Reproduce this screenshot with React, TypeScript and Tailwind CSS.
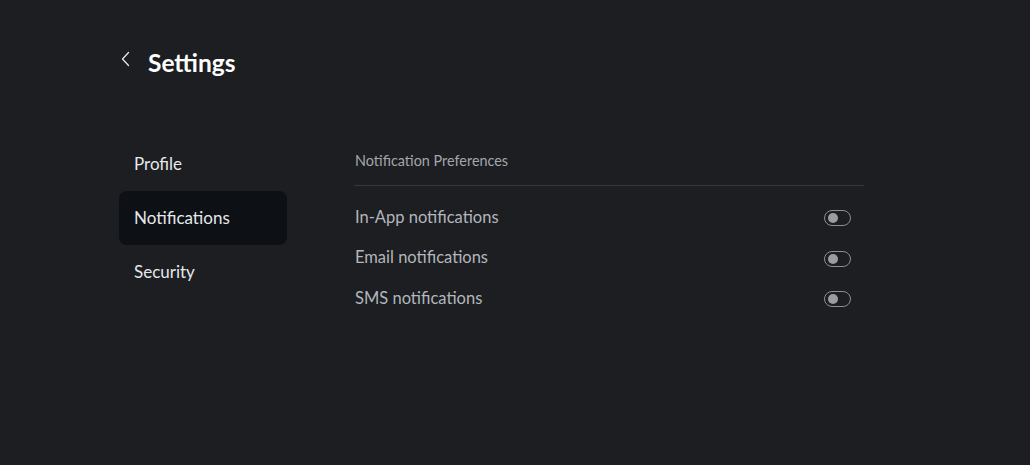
import React, { useState } from 'react';

const NAV_ITEMS = ['Profile', 'Notifications', 'Security'];

const PREFS = [
  { key: 'inApp', label: 'In-App notifications' },
  { key: 'email', label: 'Email notifications' },
  { key: 'sms', label: 'SMS notifications' },
];

function Toggle({ on, onChange }: { on: boolean; onChange: () => void }) {
  return (
    <button
      onClick={onChange}
      className={`relative w-[27px] h-[16px] rounded-full border border-[#8b8e93] flex items-center px-[3px] ${on ? 'justify-end bg-[#3b82f6]' : 'justify-start bg-transparent'}`}
    >
      <span className="block w-[10px] h-[10px] rounded-full bg-[#9a9ca0]" />
    </button>
  );
}

export default function App() {
  const [active, setActive] = useState('Notifications');
  const [prefs, setPrefs] = useState<Record<string, boolean>>({ inApp: false, email: false, sms: false });

  return (
    <div className="w-full min-h-[465px] bg-[#1c1e22] font-['Lato',sans-serif] pt-[45px] pl-[119px]">
      {/* Header */}
      <div className="flex items-center h-[36px]">
        <button className="w-[29px] h-[28px] flex items-center pl-[2px] -mt-[9px] text-[#e5e7ea]">
          <svg width="9" height="16" viewBox="0 0 9 16" fill="none">
            <path d="M7.5 1.5 L1.5 8 L7.5 14.5" stroke="currentColor" strokeWidth="1.3" strokeLinecap="round" strokeLinejoin="round" />
          </svg>
        </button>
        <h1 className="text-[24.5px] font-bold text-white leading-none">Settings</h1>
      </div>

      <div className="flex mt-[56px]">
        {/* Sidebar */}
        <nav className="w-[168px] flex flex-col">
          {NAV_ITEMS.map(item => (
            <button
              key={item}
              onClick={() => setActive(item)}
              className={`h-[54px] px-[15px] text-left text-[17px] text-[#e6e8eb] rounded-[8px] ${active === item ? 'bg-[#0d1014]' : ''}`}
            >
              {item}
            </button>
          ))}
        </nav>

        {/* Content */}
        <section className="ml-[67px] w-[510px] pt-[14px]">
          <div className="text-[14.4px] text-[#a3a6aa] pl-[1px] pb-[14px] border-b border-[#34373c] leading-[20px]">
            Notification Preferences
          </div>
          <div className="flex flex-col pt-[12px]">
            {PREFS.map(p => (
              <div key={p.key} className="flex items-center justify-between h-[40.5px] pl-[1px] pr-[13px]">
                <span className="text-[16.5px] text-[#b3b6ba] -mt-[2px]">{p.label}</span>
                <Toggle on={prefs[p.key]} onChange={() => setPrefs(s => ({ ...s, [p.key]: !s[p.key] }))} />
              </div>
            ))}
          </div>
        </section>
      </div>
    </div>
  );
}
